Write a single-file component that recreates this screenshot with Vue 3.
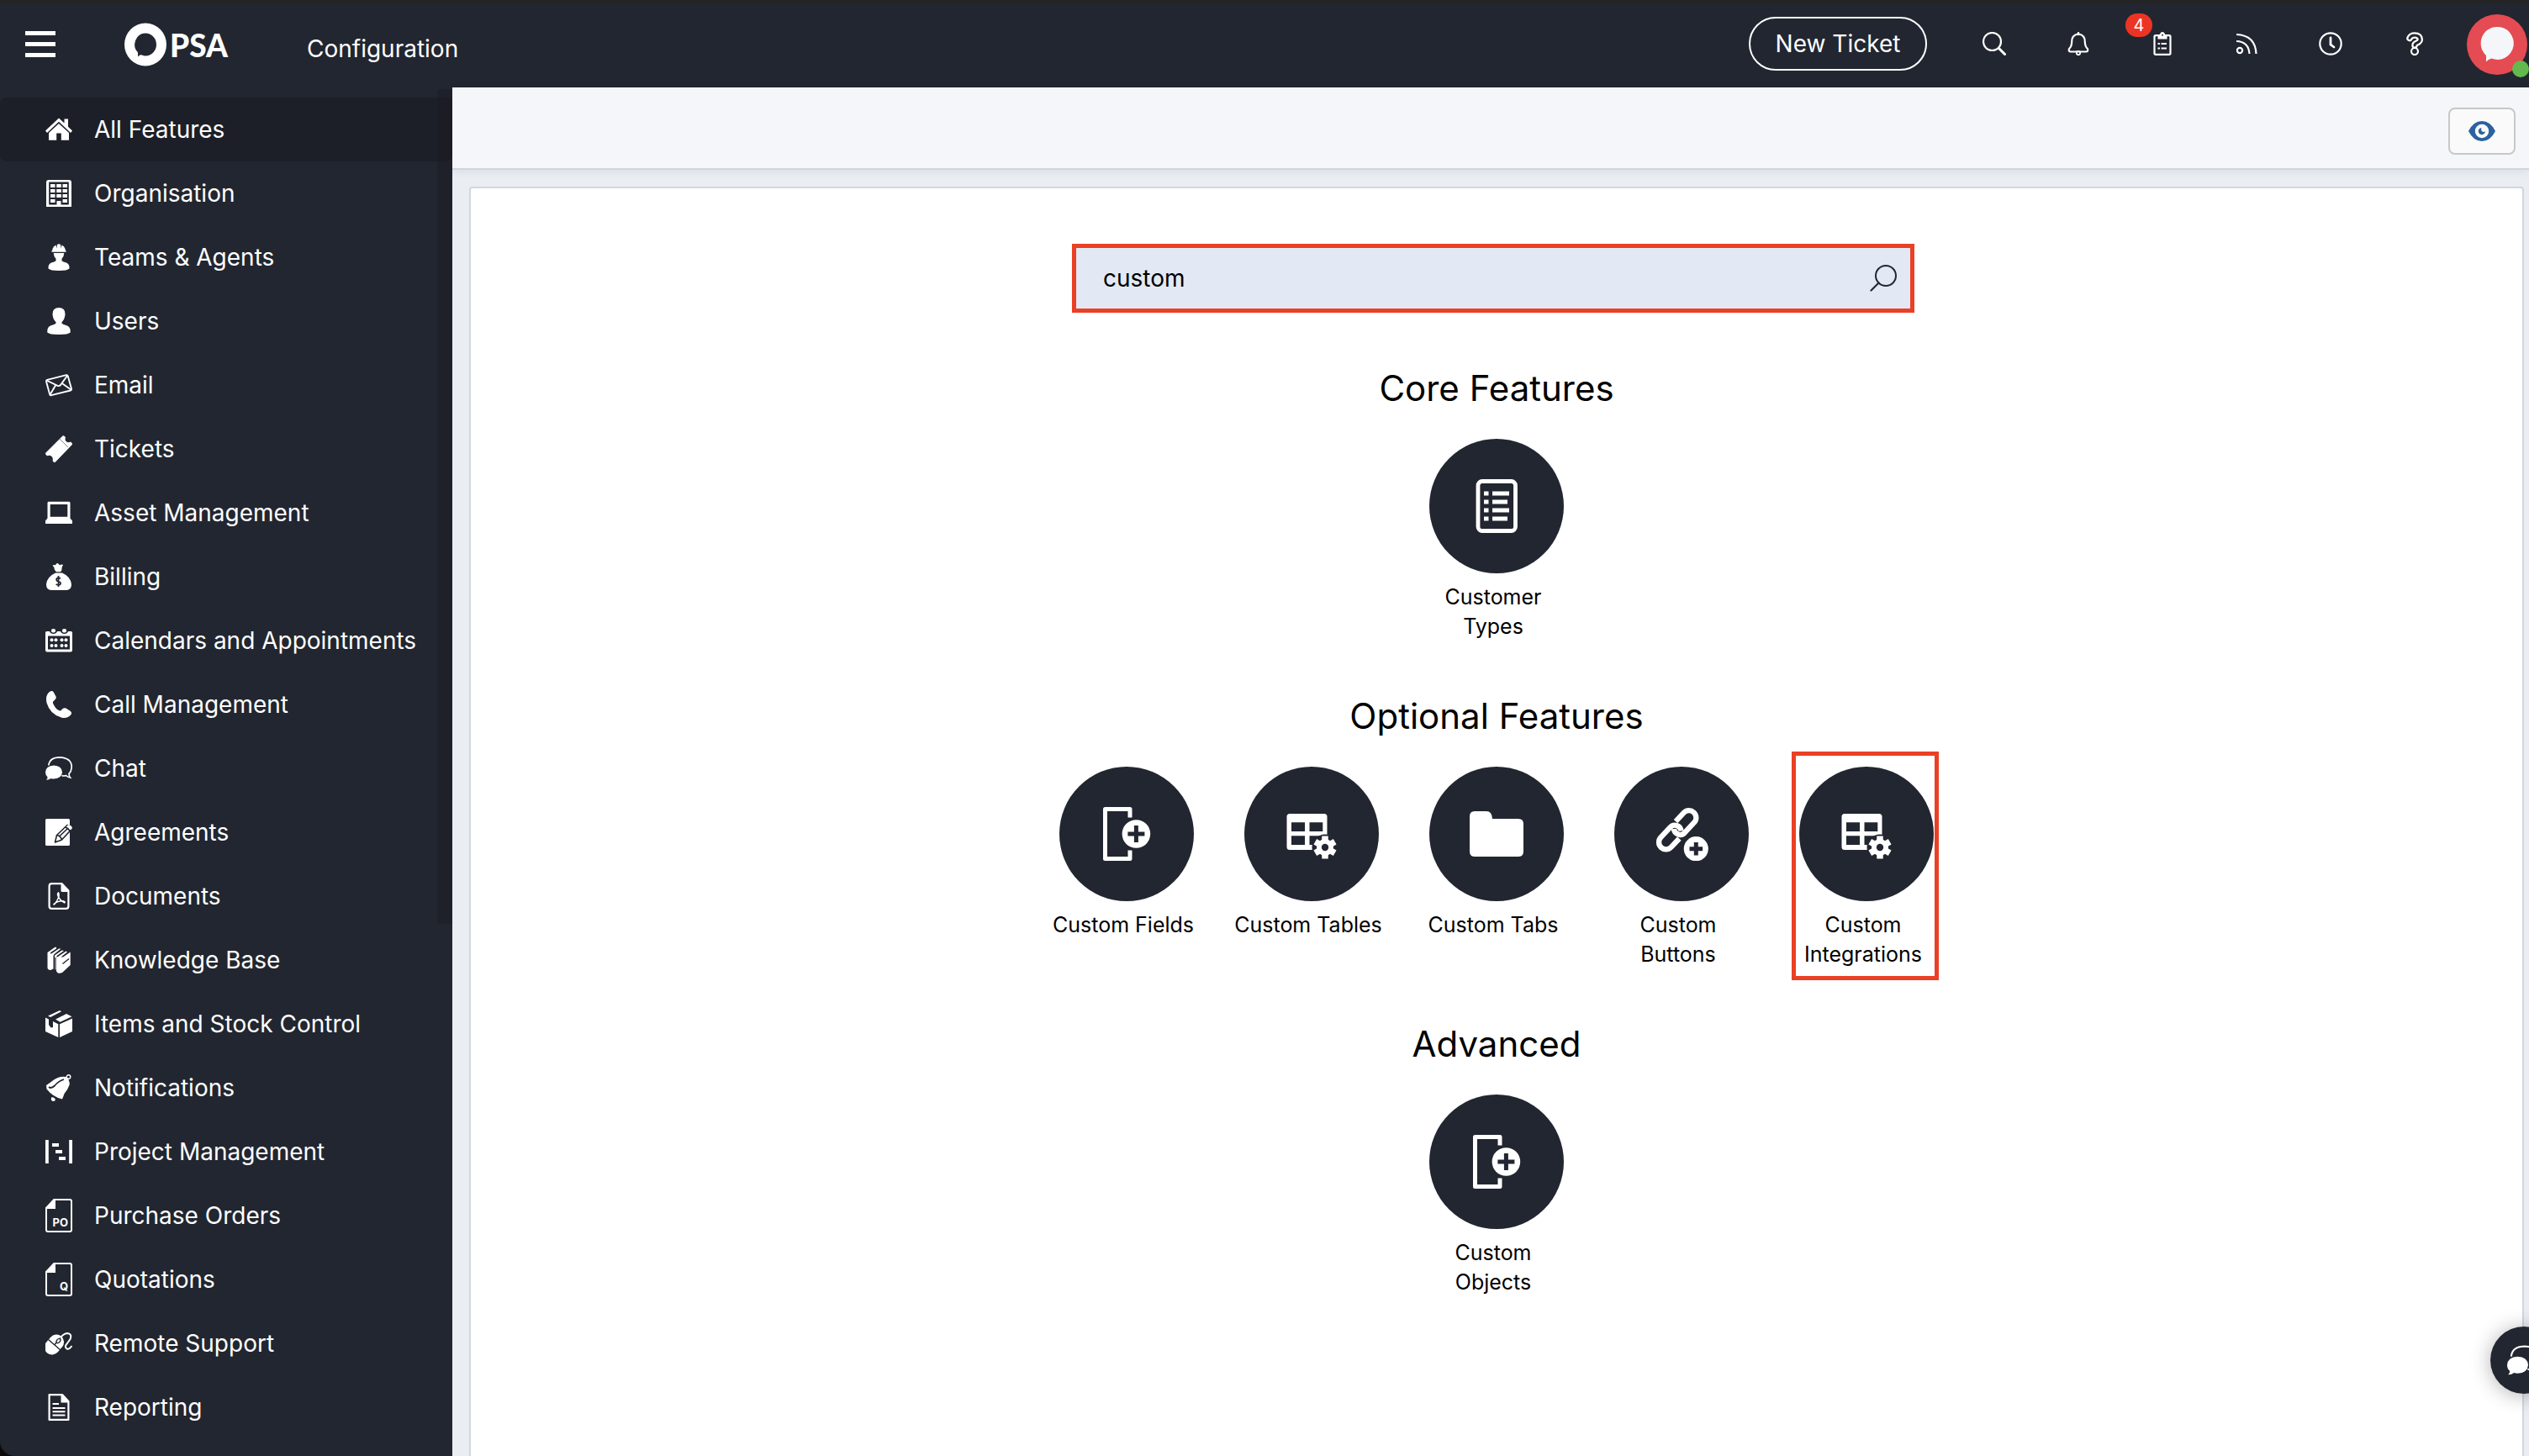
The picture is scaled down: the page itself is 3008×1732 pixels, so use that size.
<script setup>
import { ref } from 'vue'

const search = ref('custom')

const menu = [
  { label: 'All Features', icon: 'home', active: true },
  { label: 'Organisation', icon: 'building' },
  { label: 'Teams & Agents', icon: 'worker' },
  { label: 'Users', icon: 'user' },
  { label: 'Email', icon: 'mail' },
  { label: 'Tickets', icon: 'ticket' },
  { label: 'Asset Management', icon: 'laptop' },
  { label: 'Billing', icon: 'money' },
  { label: 'Calendars and Appointments', icon: 'calendar' },
  { label: 'Call Management', icon: 'phone' },
  { label: 'Chat', icon: 'chat' },
  { label: 'Agreements', icon: 'agreement' },
  { label: 'Documents', icon: 'pdf' },
  { label: 'Knowledge Base', icon: 'books' },
  { label: 'Items and Stock Control', icon: 'box' },
  { label: 'Notifications', icon: 'bell-solid' },
  { label: 'Project Management', icon: 'gantt' },
  { label: 'Purchase Orders', icon: 'page', mark: 'PO' },
  { label: 'Quotations', icon: 'page', mark: 'Q' },
  { label: 'Remote Support', icon: 'mouse' },
  { label: 'Reporting', icon: 'report' },
]

const actions = [
  { label: 'Search', icon: 'search' },
  { label: 'Alerts', icon: 'bell' },
  { label: 'Tasks', icon: 'clipboard', badge: 4 },
  { label: 'Feed', icon: 'rss' },
  { label: 'Timer', icon: 'clock' },
  { label: 'Help', icon: 'help' },
]

const sections = [
  { title: 'Core Features', tiles: [{ label: 'Customer Types', icon: 'list' }] },
  {
    title: 'Optional Features',
    tiles: [
      { label: 'Custom Fields', icon: 'field' },
      { label: 'Custom Tables', icon: 'table' },
      { label: 'Custom Tabs', icon: 'folder' },
      { label: 'Custom Buttons', icon: 'link' },
      { label: 'Custom Integrations', icon: 'table', marked: true },
    ],
  },
  { title: 'Advanced', tiles: [{ label: 'Custom Objects', icon: 'field' }] },
]
</script>

<template>
  <div class="app">
    <svg class="sprite" aria-hidden="true">
      <!-- Sidebar icons: 32 wide, 40 high -->
      <symbol id="home" viewBox="0 -4 32 40">
        <path fill="#fff" d="M16 2.500 22.500 8.500V3.500H27V12.800L32 17.500 30 20 16 6.800 2 20 0 17.500zM16 9 28 20V28.700H18.800V20.500H13.200V28.700H4V20z" />
      </symbol>
      <symbol id="building" viewBox="0 -4 32 40">
        <path fill="#fff" fill-rule="evenodd" d="M4 0H28Q31 0 31 3V32H1V3Q1 0 4 0zM4.200 2.600V29.600H13.500V25H18.500V29.600H27.800V2.600z" />
        <path fill="#fff" d="M6 5h5.500v4H6zM13.300 5h5.500v4h-5.500zM20.500 5H26v4h-5.500zM6 11h5.500v4H6zM13.300 11h5.500v4h-5.500zM20.500 11H26v4h-5.500zM6 17h5.500v4H6zM13.300 17h5.500v4h-5.500zM20.500 17H26v4h-5.500zM6 23h5.500v4H6zM20.500 23H26v4h-5.500z" />
      </symbol>
      <symbol id="worker" viewBox="0 -4 32 40">
        <path fill="#fff" d="M7.500 9.800V8.500Q8.500 7.500 8.500 6 9.500 2.500 12.500 1.500L13.500 5.500 14 .8Q16 -.5 18 .8L18.500 5.500 19.500 1.500Q22.500 2.500 23.500 6 23.500 7.500 24.500 8.500V9.800zM9.700 11H22.300Q22 15.500 19.500 17.800V20.200Q21 21.500 25 22.500 28.500 24 28.500 28V29.500Q26 32 16 32T3.500 29.500V28Q3.500 24 7 22.500 11 21.500 12.500 20.200V17.800Q10 15.500 9.700 11z" />
      </symbol>
      <symbol id="user" viewBox="0 -4 32 40">
        <path fill="#fff" d="M16 0Q23.500 0 23.500 7.500 23.300 13.500 19.500 17.200V18.800Q21 20 25.500 21.300 29.700 23 29.700 27.500V29.500Q27 32 16 32T2.300 29.500V27.500Q2.300 23 6.500 21.300 11 20 12.500 18.800V17.200Q8.700 13.500 8.500 7.500 8.500 0 16 0z" />
      </symbol>
      <symbol id="mail" viewBox="0 -4 32 40">
        <g fill="none" stroke="#fff" stroke-width="1.900" stroke-linejoin="round">
          <path d="M2 9.800 24.800 4.200Q26.300 4 26.700 5.300L31 20.500Q31.200 22 29.800 22.500L7 28.200Q5.500 28.500 5.200 27.200L1 11.700Q1 10.200 2 9.800z" />
          <path d="M1.500 10.500 14.500 16.800Q16.500 17.700 18 16L26.300 4.500M5.500 27.500 12.300 16M30.700 21.800 19.800 14" />
        </g>
      </symbol>
      <symbol id="ticket" viewBox="0 -4 32 40">
        <path fill="#fff" d="M20.500 .5Q21.800 -.3 22.800 1L24 2.300Q22.800 5.500 24.800 7.200 27 9 30 7.600L31.500 9Q32.500 10.200 31.500 11.300L12 31.500Q10.800 32.500 9.700 31.500L8.500 30Q9.500 27 7.500 25 5.300 23 2 24.300L.5 22.800Q-.5 21.600 .5 20.500z" />
        <path stroke="#222630" stroke-width="1" stroke-dasharray="1.500 1.300" d="M17.500 4.500 27 14" />
      </symbol>
      <symbol id="laptop" viewBox="0 -4 32 40">
        <path fill="#fff" fill-rule="evenodd" d="M4 2.700H28Q29.300 2.700 29.500 4V22.500L32 25.500V29H0V25.500L2.500 22.500V4Q2.700 2.700 4 2.700zM5.700 6V20.800H26.300V6z" />
      </symbol>
      <symbol id="money" viewBox="0 -4 32 40">
        <path fill="#fff" d="M8.500 2.500Q10 1.500 12 2.300 13 -.3 15 .2L17 2.200Q19.500 .8 21 1.800 19.500 4 19.300 8.500L18 10.300H13L11 8Q11 5 8.500 2.500zM12 11.500H20Q30 16 31 25 31 32 25 32H7Q1 32 1 25 2 16 12 11.500z" />
        <path fill="none" stroke="#222630" stroke-width="1.800" d="M18 18.300Q15.300 16.500 13.300 18.500 12.500 20.800 15.500 21.600 18.800 22.500 17.800 25 16 27 12.600 25M15.500 15V28" />
      </symbol>
      <symbol id="calendar" viewBox="0 -4 32 40">
        <path fill="#fff" fill-rule="evenodd" d="M1.500 5H5Q6 8 9.500 8T14 5H18Q19 8 22.500 8T27 5H30.500Q32 5 32 6.500V27.500Q32 29.500 30 29.500H2Q0 29.500 0 27.500V6.500Q0 5 1.500 5zM3 10.500V26.500H29V10.500z" />
        <g fill="#fff">
          <rect x="7" y="2" width="5" height="4.500" rx="2" /><rect x="20" y="2" width="5" height="4.500" rx="2" />
          <circle cx="7.500" cy="15.200" r="2" /><circle cx="12.500" cy="15.200" r="2" /><circle cx="19.500" cy="15.200" r="2" /><circle cx="24.500" cy="15.200" r="2" />
          <circle cx="7.500" cy="22" r="2" /><circle cx="12.500" cy="22" r="2" /><circle cx="19.500" cy="22" r="2" /><circle cx="24.500" cy="22" r="2" />
        </g>
      </symbol>
      <symbol id="phone" viewBox="0 -4 32 40">
        <path fill="#fff" d="M5.500 .5Q8.500 -.8 9.800 1.500L12.500 6.500Q13.500 9 11 10.800 8.300 12.500 9 14.500 11.500 21 16.500 23.300 18.500 24 20 21.500 22 19.500 24.500 20.500L29.500 23.800Q32 25.500 30.500 28 26.500 33 19.500 31.700 5.500 28 1.500 14 -.5 4.500 5.500 .5z" />
      </symbol>
      <symbol id="chat" viewBox="0 -4 32 40">
        <path fill="none" stroke="#fff" stroke-width="1.700" d="M3.800 12.500Q5 2.800 17 2.800 31 3.500 31.200 14 31 19.500 28 22.300 28 25 29.500 27 26.500 26.500 24.500 24.500 22 25.500 19.500 24.500" />
        <path fill="#fff" d="M10 12.500Q19.500 13 20 20.500 19.500 28 10 28.500 8 28.500 6.500 28 4 30 1 29.700 2.800 28.300 2.500 26.200 0 24 0 20.500 .5 13 10 12.500z" />
      </symbol>
      <symbol id="agreement" viewBox="0 -4 32 40">
        <rect width="29" height="32" rx="1.500" fill="#fff" />
        <path fill="#fff" stroke="#222630" stroke-width="1.600" stroke-linejoin="round" d="M11.500 28 13.500 19.500 26 7.500Q30 8 31.500 12L19.500 25zM13.500 19.500Q18 20 19.500 25M23.500 10Q27.500 11 29 14.800M17 20.500 26 12" />
        <path fill="#fff" d="M25.500 8.500 27.500 7Q31.500 8 32 11L30 13.500Q29 10 25.500 8.500z" />
      </symbol>
      <symbol id="pdf" viewBox="0 -4 32 40">
        <path fill="none" stroke="#fff" stroke-width="2.200" d="M7.500 1.100H19.500L27.400 9.500V28Q27.400 30.900 24.500 30.900H7.500Q4.600 30.900 4.600 28V4Q4.600 1.100 7.500 1.100z" />
        <path fill="#fff" d="M18.500 1H20.500L28 9.500V11H20Q18.500 11 18.500 9.500z" />
        <path fill="none" stroke="#fff" stroke-width="1.500" d="M15.500 12Q13.500 13 15.500 17T22.500 23.800Q24.500 23 21 21.800 15 21.500 10.500 25.200 9 26.500 11 25.500 14 22.500 15.800 17 16.500 13 15.500 12z" />
      </symbol>
      <symbol id="books" viewBox="0 -4 32 40">
        <path fill="#fff" d="M2.500 7 11 1Q13.500 -.5 13 2.500L6.500 6.800Q5 8.500 7 8.500L16 2.500 18.500 2.500 10.500 9Q9.500 10 9.500 12V26.500L6 28Q2.500 27.500 2.500 25zM11 10.500 19.500 4.500 22 5 13.500 11V27Q11.500 28 11 27z" />
        <path fill="#fff" d="M15 12 24.500 5.500 26 6.500 18.500 12.500H21L29.700 6.500V22L20 31Q13 33.500 12.700 27V14Q13 12.500 15 12z" />
        <path stroke="#222630" stroke-width="1.500" d="M20.500 20.500 28 14.500" />
        <path stroke="#222630" stroke-width="1.200" d="M12 29V13" />
      </symbol>
      <symbol id="box" viewBox="0 -4 32 40">
        <path fill="#fff" d="M3 6.500 17 0 19 1.200 6 8zM12 10.500 25 4 31.500 7.300 17.500 13.800zM0 8.500 4 10.500V17L6.500 20.500 9 20V13L15.300 16.300V32L0 25zM17 16.300 32 9.500V25L17 32z" />
      </symbol>
      <symbol id="bell-solid" viewBox="0 -4 32 40">
        <path fill="#fff" d="M1 13Q5 10.500 10 6.500 17 1.500 24.500 3 28.500 5 28.800 12 27 17.500 22.500 23 21.500 26 20 29.500 9 27 1.500 17.500zM7 27.500Q9.500 26.500 11.500 29 12.500 31 10 32 6 32 7 27.500z" />
        <circle cx="27.500" cy="3" r="2.300" fill="none" stroke="#fff" stroke-width="1.400" />
        <path fill="none" stroke="#222630" stroke-width="1.800" d="M4 15Q7 17.500 11 13.500 15.500 8 22 6" />
      </symbol>
      <symbol id="gantt" viewBox="0 -4 32 40">
        <path fill="#fff" d="M0 2h3.800v28H0zM28.200 2H32v28h-3.800zM8 6h8v4H8zM12 14h8v4h-8zM16 22h8v4h-8z" />
      </symbol>
      <symbol id="page" viewBox="0 -4 32 40">
        <path fill="none" stroke="#fff" stroke-width="2" d="M10.500 -3H29Q31 -3 31 -1V33Q31 35 29 35H3Q1 35 1 33V7z" />
        <path fill="#fff" d="M10-4H12V8H0V7z" />
      </symbol>
      <symbol id="mouse" viewBox="0 -4 32 40">
        <rect x="-13" y="-9" width="26" height="18" rx="9" transform="translate(10.500 17.500) rotate(-50)" fill="#fff" />
        <path fill="none" stroke="#222630" stroke-width="1.400" d="M3.500 11.500 18 24M11 17.500 18 9.500" />
        <ellipse cx="15.500" cy="13" rx="3" ry="1.900" transform="rotate(-48 15.500 13)" fill="#fff" stroke="#222630" stroke-width="1.300" />
        <path fill="none" stroke="#fff" stroke-width="2" d="M18.500 8.500Q22.500 4 26.500 4 32 5 29.500 11L24.500 18Q23 21 25.500 22.500 28.500 23.500 31.500 19" />
      </symbol>
      <symbol id="report" viewBox="0 -4 32 40">
        <path fill="none" stroke="#fff" stroke-width="2.200" stroke-linejoin="round" d="M4.600 1.100H20L27.400 9V30.900H4.600z" />
        <path fill="#fff" d="M18.500 1H21L28 9V10.500H18.500zM8.500 11h7.500v2H8.500zM8.500 16h15v2h-15zM8.500 20.300h15v2h-15zM8.500 24.600h15v2h-15z" />
      </symbol>

      <!-- Header icons -->
      <symbol id="search" viewBox="0 0 28 28">
        <circle cx="11.500" cy="11.500" r="10.500" fill="none" stroke="#fff" stroke-width="2.200" />
        <path stroke="#fff" stroke-width="3" stroke-linecap="round" d="M19.500 19.500 26.500 26.500" />
      </symbol>
      <symbol id="bell" viewBox="0 0 28 28">
        <path fill="none" stroke="#fff" stroke-width="2.200" stroke-linejoin="round" d="M14 2.500Q22 3.500 21.800 12 22 17.500 25 20 26 23.500 23 23.500H5Q2 23.500 3 20 6 17.500 6.200 12 6 3.500 14 2.500z" />
        <path stroke="#fff" stroke-width="2.500" stroke-linecap="round" d="M14 1.300V3" />
        <circle cx="14" cy="25" r="2.200" fill="none" stroke="#fff" stroke-width="1.800" />
      </symbol>
      <symbol id="clipboard" viewBox="0 0 28 28">
        <rect x="4.500" y="4.200" width="19" height="22.600" rx="1.500" fill="none" stroke="#fff" stroke-width="2.200" />
        <path fill="#fff" d="M8.500 4Q11 3.500 11.300 2 12 0 14 0T16.700 2Q17 3.500 19.500 4V8.500H8.500zM8.500 13h2.500v2H8.500zM12.500 13h6.500v2h-6.500zM8.500 18.500h2.500v2H8.500zM12.500 18.500h6.500v2h-6.500z" />
        <circle cx="14" cy="3.800" r="1" fill="#222630" />
      </symbol>
      <symbol id="rss" viewBox="0 0 28 28">
        <g fill="none" stroke="#fff" stroke-width="2.200">
          <circle cx="6" cy="22" r="3.100" /><path d="M2 11Q16.500 11.500 17.500 26M2 3Q24.500 4 25.500 26" />
        </g>
      </symbol>
      <symbol id="clock" viewBox="0 0 28 28">
        <circle cx="14" cy="14" r="12.700" fill="none" stroke="#fff" stroke-width="2.200" />
        <path fill="none" stroke="#fff" stroke-width="2.800" stroke-linecap="round" d="M14 7V15L18 18" />
      </symbol>
      <symbol id="help" viewBox="0 0 28 28">
        <g fill="none" stroke-linecap="round" stroke-linejoin="round">
          <path stroke="#fff" stroke-width="7.500" d="M8 7.500Q9.500 4 14 4 20 4 20.300 9 20.300 11.500 16.500 13.200 14 14.300 14 16" />
          <path stroke="#222630" stroke-width="3" d="M8 7.500Q9.500 4 14 4 20 4 20.300 9 20.300 11.500 16.500 13.200 14 14.300 14 16" />
          <circle cx="14" cy="23" r="4" stroke="#fff" stroke-width="2.200" fill="#222630" />
        </g>
      </symbol>

      <!-- Feature tile icons -->
      <symbol id="list" viewBox="0 0 64 64">
        <rect x="10" y="2.500" width="44.500" height="59" rx="5" fill="none" stroke="#fff" stroke-width="4.800" />
        <path fill="#fff" d="M17 14.500h5.500v5H17zM27 14.500h20v5H27zM17 24.500h5.500v5H17zM27 24.500h18v5H27zM17 34.500h5.500v5H17zM27 34.500h20v5H27zM17 44.500h5.500v5H17zM27 44.500h18v5H27z" />
      </symbol>
      <symbol id="field" viewBox="0 0 64 64">
        <path fill="none" stroke="#fff" stroke-width="5" stroke-linejoin="round" d="M36 12.500V2.500H6.500V61.500H36V51.500" />
        <circle cx="43.400" cy="32" r="16.800" fill="#fff" />
        <path stroke="#222630" stroke-width="5" d="M33.400 32H53.400M43.400 22V42" />
      </symbol>
      <symbol id="table" viewBox="0 0 64 64">
        <path fill="#fff" fill-rule="evenodd" d="M6 8H47Q50.500 8 50.500 11.500V47.500Q50.500 51 47 51H6Q2.500 51 2.500 47.500V11.500Q2.500 8 6 8zM8 18.300V29H24V18.300zM29.500 18.300V29H45.300V18.300zM8 34.300V45H24V34.300zM29.500 34.300V45H45.300V34.300z" />
        <circle cx="48" cy="48" r="15.500" fill="#222630" />
        <path stroke="#fff" stroke-width="7.500" d="M48 34.500V61.500M36.300 41.300 59.700 54.700M36.300 54.700 59.700 41.300" />
        <circle cx="48" cy="48" r="10" fill="#fff" />
        <circle cx="48" cy="48" r="4.200" fill="#222630" />
      </symbol>
      <symbol id="folder" viewBox="0 0 64 64">
        <path fill="#fff" d="M6 5H20Q26.500 5 27 14H58Q64 14 64 20V53Q64 59 58 59H6Q0 59 0 53V11Q0 5 6 5z" />
      </symbol>
      <symbol id="link" viewBox="0 0 64 64">
        <g transform="translate(27.200 27.300) rotate(-47)" fill="none" stroke="#fff" stroke-width="6.300" stroke-linecap="butt">
          <path d="M-6 8.500H-20A8.500 8.500 0 0 1 -20 -8.500H-4A7.500 7.500 0 0 1 2 4" />
          <path d="M6 -8.500H20A8.500 8.500 0 0 1 20 8.500H4A7.500 7.500 0 0 1 -2 -4" />
        </g>
        <circle cx="49.300" cy="49.700" r="14.600" fill="#fff" />
        <path stroke="#222630" stroke-width="5" d="M41.500 49.700H57.100M49.300 41.900V57.500" />
      </symbol>
    </svg>

    <header class="topbar">
      <button class="menu-toggle" aria-label="Menu"><i></i><i></i><i></i></button>
      <a class="logo" href="#">
        <svg width="50" height="52" viewBox="0 0 50 52" aria-hidden="true">
          <path fill="#fff" fill-rule="evenodd" d="M25 .5A25 25.500 0 1 1 25 51.500A25 25.500 0 1 1 25 .5zM25 12.500A13 13.500 0 0 0 16 35.500V40.500Q18.500 37.500 21 38.500 23 39.500 25 39.500A13 13.500 0 0 0 25 12.500z" />
        </svg>
        <span>PSA</span>
      </a>
      <h1>Configuration</h1>
      <button class="new-ticket">New Ticket</button>
      <div class="actions">
        <button v-for="a in actions" :key="a.icon" class="action" :aria-label="a.label">
          <svg width="28" height="28"><use :href="'#' + a.icon" /></svg>
          <span v-if="a.badge" class="badge">{{ a.badge }}</span>
        </button>
      </div>
      <button class="avatar" aria-label="Profile">
        <svg width="40" height="42" viewBox="0 0 40 42" aria-hidden="true">
          <path fill="#f5f6f9" d="M20 0A19 19.500 0 1 1 13.500 37.500Q9.500 38.500 7 41.500V34A19 19.500 0 0 1 20 0z" />
        </svg>
        <span class="status"></span>
      </button>
    </header>

    <div class="body">
      <nav class="sidebar">
        <a v-for="m in menu" :key="m.label" href="#" :class="['item', { active: m.active }]">
          <span class="icon">
            <svg width="32" height="40" aria-hidden="true"><use :href="'#' + m.icon" /></svg>
            <span v-if="m.mark" class="mark">{{ m.mark }}</span>
          </span>
          <span>{{ m.label }}</span>
        </a>
      </nav>

      <main class="main">
        <div class="toolbar">
          <button class="view" aria-label="View">
            <svg width="32" height="26" viewBox="0 0 32 26" aria-hidden="true">
              <path fill="#2b619f" d="M0 13Q6 1 16 1T32 13Q26 25 16 25T0 13z" />
              <circle cx="16" cy="13" r="8.200" fill="#fafafa" />
              <path fill="#2b619f" d="M15.500 9Q14.500 12.500 16.500 13.500T20 13Q19.500 17 16 17.200 12 17 11.800 13 12 9.500 15.500 9z" />
            </svg>
          </button>
        </div>
        <div class="panel">
          <div class="search">
            <input v-model="search" type="text" aria-label="Search features" />
            <svg width="32" height="32" viewBox="0 0 32 32" aria-hidden="true">
              <circle cx="19" cy="13" r="12" fill="none" stroke="#222630" stroke-width="2" />
              <path stroke="#222630" stroke-width="2.200" stroke-linecap="round" d="M10.500 21.500 1.500 30.500" />
            </svg>
          </div>
          <section v-for="s in sections" :key="s.title" class="group">
            <h2>{{ s.title }}</h2>
            <div class="tiles">
              <a v-for="t in s.tiles" :key="t.label" href="#" :class="['tile', { marked: t.marked }]">
                <span class="disc"><svg width="64" height="64" aria-hidden="true"><use :href="'#' + t.icon" /></svg></span>
                <span class="caption">{{ t.label }}</span>
              </a>
            </div>
          </section>
        </div>
      </main>
    </div>

    <button class="chat-fab" aria-label="Chat">
      <svg width="40" height="50" aria-hidden="true"><use href="#chat" /></svg>
    </button>
  </div>
</template>

<style>
body {
  margin: 0;
  background: #0d0b0c;
}
</style>

<style scoped>
.app {
  display: flex;
  flex-direction: column;
  height: 100vh;
  overflow: hidden;
  font-family: Inter, "Open Sans", sans-serif;
  font-size: 28px;
  color: #000;
}
.sprite {
  position: absolute;
  width: 0;
  height: 0;
}
button {
  padding: 0;
  border: 0;
  background: none;
  font: inherit;
  color: inherit;
}
a {
  color: inherit;
  text-decoration: none;
}
svg {
  display: block;
  flex: none;
}

.topbar {
  display: flex;
  align-items: center;
  flex: none;
  height: 104px;
  padding: 0 2px 0 30px;
  box-sizing: border-box;
  background: #222630;
  box-shadow: inset 0 4px #252425;
  color: #fff;
}
.menu-toggle {
  display: flex;
  flex-direction: column;
  gap: 8px;
  width: 36px;
  margin-right: 82px;
}
.menu-toggle i {
  height: 5px;
  background: #fff;
}
.logo {
  display: flex;
  align-items: center;
  gap: 4px;
  padding-top: 2px;
  font: 900 37px Lato, sans-serif;
}
h1 {
  margin: 12px 0 0 94px;
  font-size: 28px;
  font-weight: 400;
}
.new-ticket {
  width: 212px;
  height: 64px;
  margin-left: auto;
  margin-right: 30px;
  border: 2px solid #fff;
  border-radius: 32px;
}
.actions {
  display: flex;
}
.action {
  position: relative;
  display: flex;
  justify-content: center;
  width: 100px;
}
.badge {
  position: absolute;
  top: -22px;
  left: 6px;
  width: 32px;
  border-radius: 14px;
  background: #ec3424;
  font-size: 20px;
  line-height: 28px;
  text-align: center;
}
.avatar {
  position: relative;
  display: flex;
  align-items: center;
  justify-content: center;
  width: 72px;
  height: 72px;
  margin: 2px 0 0 12px;
  border-radius: 50%;
  background: #e54b52;
}
.status {
  position: absolute;
  right: -2px;
  bottom: -3px;
  width: 20px;
  height: 20px;
  border-radius: 50%;
  background: #63b94d;
}

.body {
  display: flex;
  flex: 1;
  min-height: 0;
}
.sidebar {
  position: relative;
  flex: none;
  width: 538px;
  padding-top: 12px;
  box-sizing: border-box;
  border-bottom-left-radius: 18px;
  background: #222630;
  color: #fff;
}
.sidebar::after {
  content: "";
  position: absolute;
  top: 2px;
  right: 0;
  width: 18px;
  height: 61%;
  background: rgba(26, 20, 28, 0.28);
}
.item {
  display: flex;
  align-items: center;
  gap: 26px;
  height: 76px;
  padding-left: 54px;
  border-radius: 8px;
  white-space: nowrap;
}
.item.active {
  background: #1c1f27;
}
.icon {
  position: relative;
}
.mark {
  position: absolute;
  right: 5px;
  bottom: 4px;
  font-size: 13px;
  font-weight: 700;
  line-height: 16px;
}

.main {
  display: flex;
  flex-direction: column;
  flex: 1;
  min-width: 0;
  background: #eaeef3;
}
.toolbar {
  display: flex;
  align-items: center;
  justify-content: flex-end;
  flex: none;
  height: 98px;
  padding: 8px 16px 0 0;
  box-sizing: border-box;
  border-bottom: 2px solid #cfd7df;
  background: #f5f6f9;
  box-shadow: 0 2px 10px rgba(0, 0, 0, 0.08);
}
.toolbar .view {
  display: flex;
  align-items: center;
  justify-content: center;
  width: 80px;
  height: 56px;
  box-sizing: border-box;
  border: 2px solid #c8c8c8;
  border-radius: 8px;
  background: #fafafa;
}
.panel {
  display: flex;
  flex-direction: column;
  align-items: center;
  flex: 1;
  margin: 20px 6px 0 20px;
  padding-top: 66px;
  border: 2px solid #cfd7df;
  border-bottom: 0;
  border-radius: 4px 4px 0 0;
  background: #fff;
}
.search {
  display: flex;
  align-items: center;
  width: 1002px;
  height: 82px;
  margin: 0 8px 60px 0;
  padding: 0 16px 0 32px;
  box-sizing: border-box;
  border: 5px solid #ea4025;
  background: #e2e9f5;
}
.search input {
  flex: 1;
  min-width: 0;
  padding: 0;
  border: 0;
  outline: 0;
  background: none;
  font: inherit;
  color: #000;
}
.group {
  height: 390px;
}
h2 {
  margin: 0 0 30px;
  font-size: 42px;
  font-weight: 400;
  line-height: 60px;
  text-align: center;
}
.tiles {
  display: flex;
  justify-content: center;
}
.tile {
  position: relative;
  display: flex;
  flex-direction: column;
  align-items: center;
  width: 220px;
}
.disc {
  display: flex;
  align-items: center;
  justify-content: center;
  width: 160px;
  height: 160px;
  border-radius: 50%;
  background: #222630;
}
.caption {
  width: 180px;
  height: 70px;
  margin: 11px 8px 0 0;
  font-size: 25px;
  line-height: 35px;
  text-align: center;
}
.tile.marked::after {
  content: "";
  position: absolute;
  inset: -18px 24px -13px 21px;
  border: 5px solid #ea4025;
}

.chat-fab {
  position: fixed;
  right: -34px;
  bottom: 74px;
  display: flex;
  align-items: center;
  justify-content: center;
  width: 80px;
  height: 80px;
  border-radius: 50%;
  background: #222630;
  box-shadow: 0 2px 24px rgba(0, 0, 0, 0.3);
}
</style>
